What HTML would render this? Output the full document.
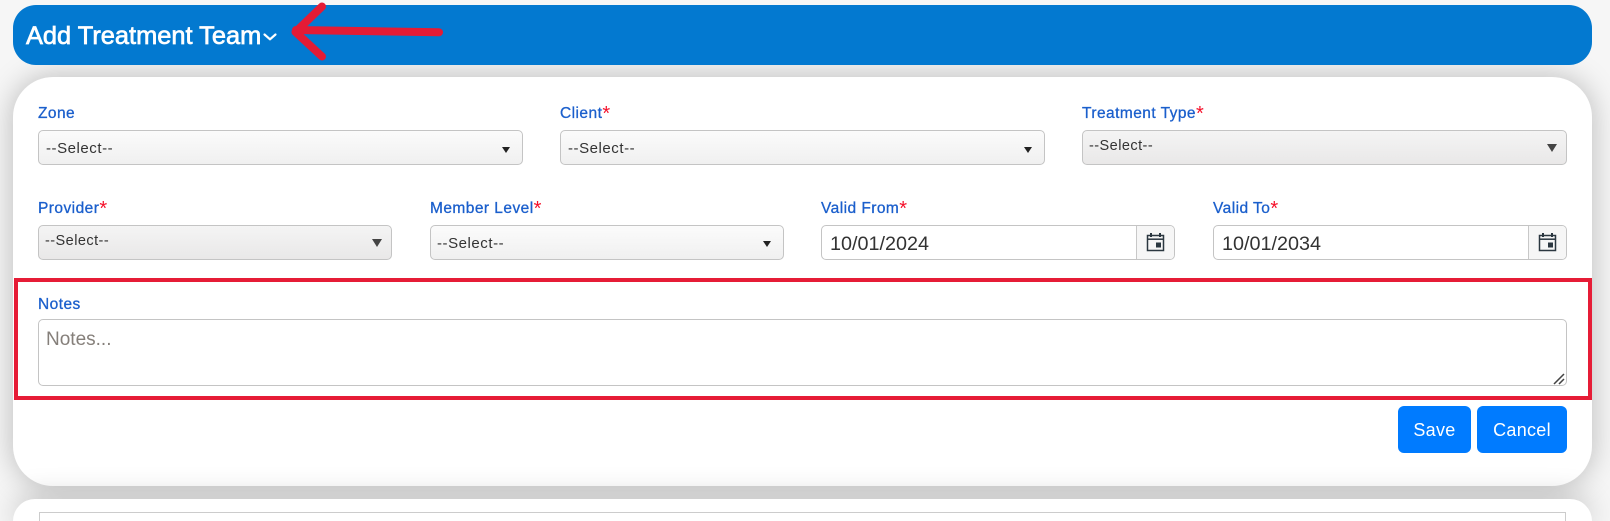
<!DOCTYPE html>
<html lang="en"><head><meta charset="utf-8"><title>Add Treatment Team</title>
<style>
html,body{margin:0;padding:0;width:1610px;height:521px;overflow:hidden;background:#f5f5f5;font-family:"Liberation Sans",sans-serif}
#wrap{position:relative;width:1610px;height:521px;overflow:hidden;background:#f6f6f6}
#wrap div,#wrap span{position:absolute;box-sizing:border-box;white-space:nowrap}
.hdr{left:13px;top:5px;width:1579px;height:60px;background:#0379d0;border-radius:23px}
.title{left:26px;top:22px;font-size:25.4px;line-height:29px;color:#fff;-webkit-text-stroke:.7px #fff}
.card{left:13px;width:1579px;background:#fff;border-radius:40px;box-shadow:0 0 30px rgba(0,0,0,.25)}
.lb{font-size:15.5px;line-height:18px;color:#1b5fcc;letter-spacing:.45px;-webkit-text-stroke:.3px #1b5fcc}
.lb i{font-style:normal;color:#f5102a;font-size:20px;line-height:10px;letter-spacing:0;-webkit-text-stroke:0;position:relative;top:1.5px}
.sel{height:35px;border:1px solid #c4c4c4;border-radius:5px;background:linear-gradient(#fbfbfb,#f0f0f0);font-size:15px;color:#333;letter-spacing:.55px}
.sel.g{background:linear-gradient(#f4f4f4,#e9e8e8);font-size:14.5px;letter-spacing:.45px}
.sel span{line-height:18px}
.tri{width:0;height:0;border-left:4px solid transparent;border-right:4px solid transparent;border-top:6.5px solid #222}
.g .tri{border-left-width:5px;border-right-width:5px;border-top:8px solid #444}
.date{height:35px;border:1px solid #c4c4c4;border-radius:5px;background:#fff}
.date span{font-size:19.8px;line-height:24px;color:#333}
.add{top:0;right:0;width:38px;height:33px;background:#f6f6f6;border-left:1px solid #c8c8c8;border-radius:0 4px 4px 0}
.btn{top:406px;height:47px;background:#007bff;border-radius:6px;color:#fff;font-size:18px;line-height:49px;text-align:center;letter-spacing:.3px}
svg{position:absolute;overflow:visible}
</style></head><body>
<div id="wrap">

<div class="card" style="top:77px;height:409px"></div>
<div class="card" style="top:499px;height:22px;border-radius:32px 32px 0 0"></div>
<div style="left:39px;top:512px;width:1527px;height:9px;border:1px solid #ccc;border-bottom:0"></div>

<div class="hdr"></div>
<span class="title">Add Treatment Team</span>
<svg style="left:263px;top:33px" width="15" height="8" viewBox="0 0 15 8"><path d="M1.5 1.5L7 6.3L12.5 1.5" fill="none" stroke="#fff" stroke-width="2.2" stroke-linecap="round" stroke-linejoin="round"/></svg>

<span class="lb" style="left:38px;top:105px">Zone</span>
<span class="lb" style="left:560px;top:105px">Client<i>*</i></span>
<span class="lb" style="left:1082px;top:105px">Treatment Type<i>*</i></span>

<div class="sel" style="left:38px;top:130px;width:485px"><span style="left:7px;top:9px">--Select--</span><div class="tri" style="right:12px;top:16px"></div></div>
<div class="sel" style="left:560px;top:130px;width:485px"><span style="left:7px;top:9px">--Select--</span><div class="tri" style="right:12px;top:16px"></div></div>
<div class="sel g" style="left:1082px;top:130px;width:485px"><span style="left:6px;top:6px">--Select--</span><div class="tri" style="right:9px;top:13px"></div></div>

<span class="lb" style="left:38px;top:200px">Provider<i>*</i></span>
<span class="lb" style="left:430px;top:200px">Member Level<i>*</i></span>
<span class="lb" style="left:821px;top:200px">Valid From<i>*</i></span>
<span class="lb" style="left:1213px;top:200px">Valid To<i>*</i></span>

<div class="sel g" style="left:38px;top:225px;width:354px"><span style="left:6px;top:6px">--Select--</span><div class="tri" style="right:9px;top:13px"></div></div>
<div class="sel" style="left:430px;top:225px;width:354px"><span style="left:6px;top:9px">--Select--</span><div class="tri" style="right:12px;top:15px"></div></div>

<div class="date" style="left:821px;top:225px;width:354px"><span style="left:8px;top:6px">10/01/2024</span><div class="add"><svg style="left:9px;top:6px" width="19" height="20" viewBox="0 0 19 20"><path d="M1.5 3.5H17.5V18.5H1.5Z" fill="none" stroke="#2b3740" stroke-width="1.5"/><path d="M1.5 7.2H17.5" stroke="#2b3740" stroke-width="1.5"/><path d="M5 1V5M14 1V5" stroke="#2b3740" stroke-width="2"/><rect x="10" y="10.5" width="5" height="5" fill="#2b3740"/></svg></div></div>
<div class="date" style="left:1213px;top:225px;width:354px"><span style="left:8px;top:6px">10/01/2034</span><div class="add"><svg style="left:9px;top:6px" width="19" height="20" viewBox="0 0 19 20"><path d="M1.5 3.5H17.5V18.5H1.5Z" fill="none" stroke="#2b3740" stroke-width="1.5"/><path d="M1.5 7.2H17.5" stroke="#2b3740" stroke-width="1.5"/><path d="M5 1V5M14 1V5" stroke="#2b3740" stroke-width="2"/><rect x="10" y="10.5" width="5" height="5" fill="#2b3740"/></svg></div></div>

<span class="lb" style="left:38px;top:296px">Notes</span>
<div style="left:38px;top:319px;width:1529px;height:67px;border:1px solid #c4c4c4;border-radius:5px;background:#fff"><span style="left:7px;top:8px;font-size:19px;line-height:24px;color:#857f7a">Notes...</span></div>
<svg style="left:1553px;top:373px" width="13" height="12" viewBox="0 0 13 12"><path d="M1 11L11 1M6 11L11 6" stroke="#444" stroke-width="1.5" fill="none"/></svg>

<div class="btn" style="left:1398px;width:73px">Save</div>
<div class="btn" style="left:1477px;width:90px">Cancel</div>

<div style="left:14px;top:278px;width:1578px;height:122px;border:4px solid #e61c36"></div>
<svg style="left:0;top:0" width="1610" height="521" viewBox="0 0 1610 521"><path d="M322 6.5L295.5 32L322 56.5M296 30L439 32.3" fill="none" stroke="#e41b35" stroke-width="8" stroke-linecap="round" stroke-linejoin="round"/></svg>
</div>
</body></html>
